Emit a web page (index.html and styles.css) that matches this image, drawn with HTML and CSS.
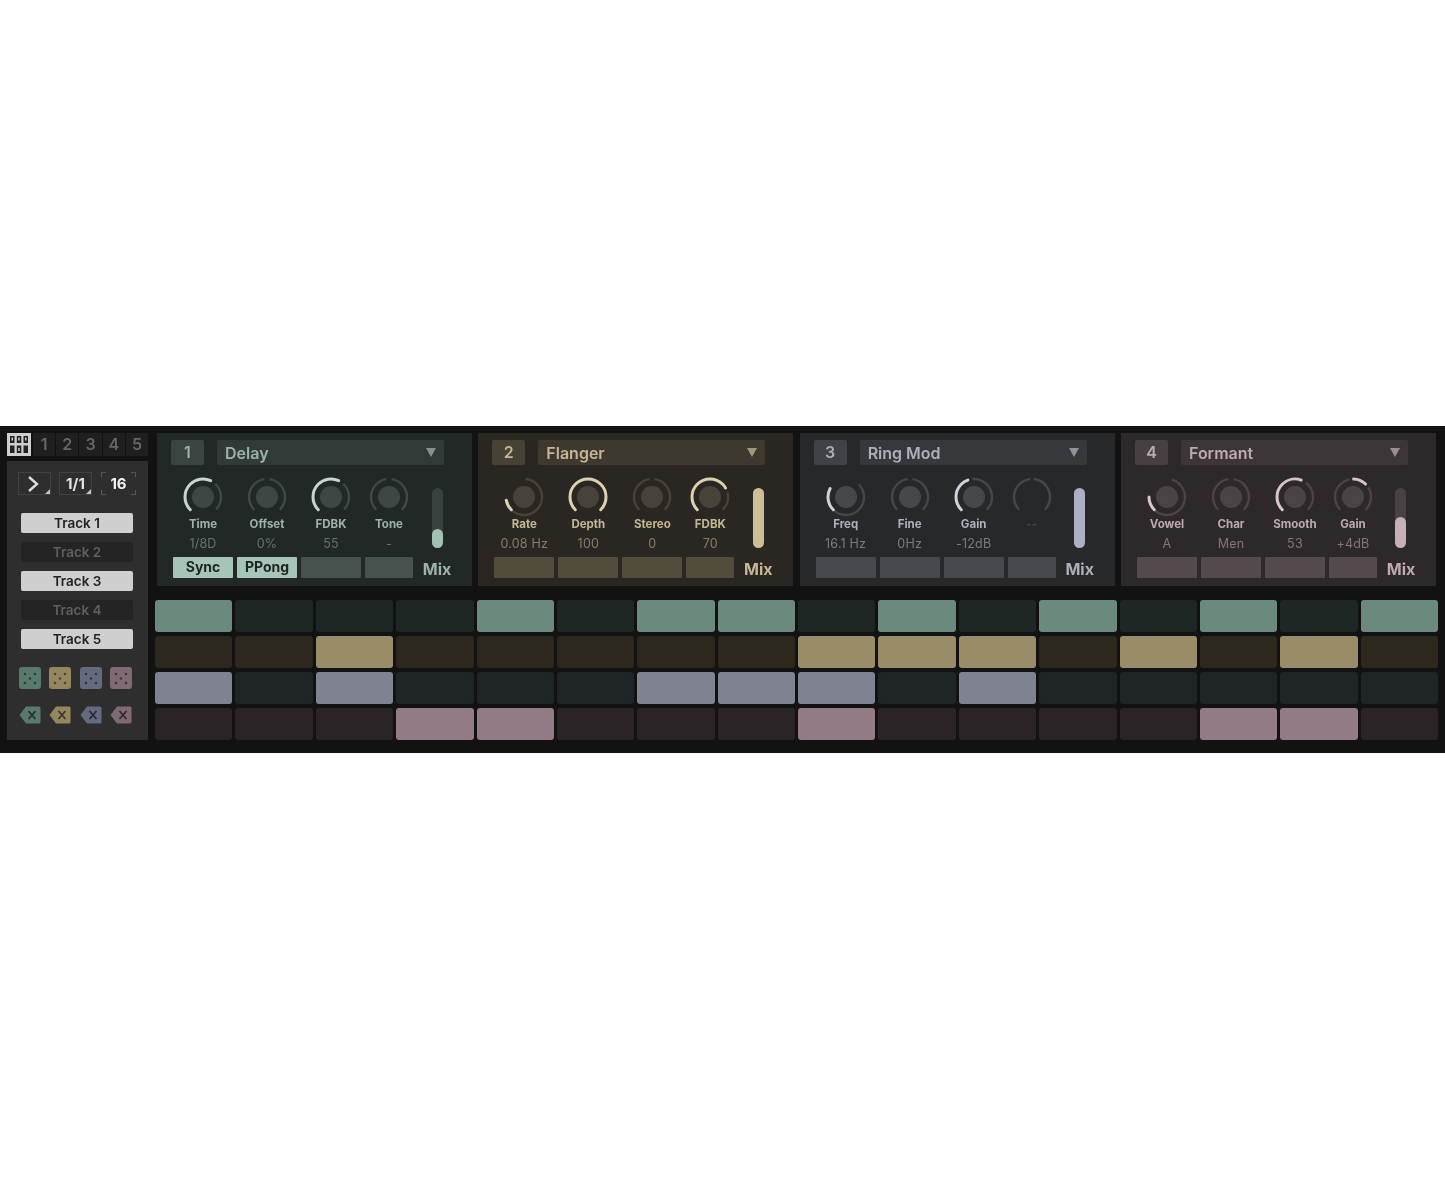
FILE: index.html
```html
<!DOCTYPE html>
<html lang="en">
<head>
<meta charset="utf-8">
<title>FX Sequencer</title>
<link rel="stylesheet" href="styles.css">
</head>
<body>
<div class="band">
  <aside class="side">
    <div class="tabs">
      <div class="tab-icon"><svg width="24" height="23" viewBox="0 0 24 23"><rect width="24" height="23" fill="#cfcfcf"/><g fill="#222"><rect x="3" y="3" width="4.5" height="7"/><rect x="9.8" y="3" width="4.5" height="7"/><rect x="16.5" y="3" width="4.5" height="7"/><rect x="3" y="12.5" width="4.5" height="7.5"/><rect x="9.8" y="12.5" width="4.5" height="7.5"/><rect x="16.5" y="12.5" width="4.5" height="7.5"/></g><g fill="#cfcfcf"><rect x="4.5" y="4.5" width="1.5" height="3"/><rect x="11.2" y="4.5" width="1.5" height="3"/><rect x="18" y="4.5" width="1.5" height="3"/><rect x="11.2" y="15" width="1.5" height="3"/></g></svg></div>
      <div class="tab">1</div><div class="tab">2</div><div class="tab">3</div><div class="tab">4</div><div class="tab">5</div>
    </div>
    <div class="side-body">
      <div class="transport">
        <div class="tbox arrow"><svg width="14" height="18" viewBox="0 0 14 18"><path d="M3 2l8 7-8 7" fill="none" stroke="#dcdcdc" stroke-width="2.4"/></svg></div>
        <div class="tbox rate">1/1</div>
        <div class="steps"><i class="c tl"></i><i class="c tr"></i><i class="c bl"></i><i class="c br"></i>16</div>
      </div>
      <div class="tracks">
        <div class="track on">Track 1</div>
        <div class="track">Track 2</div>
        <div class="track on">Track 3</div>
        <div class="track">Track 4</div>
        <div class="track on">Track 5</div>
      </div>
      <div class="icons dice">
        <svg class="green" width="22" height="22" viewBox="0 0 22 22"><use href="#die"/></svg>
        <svg class="yellow" width="22" height="22" viewBox="0 0 22 22"><use href="#die"/></svg>
        <svg class="blue" width="22" height="22" viewBox="0 0 22 22"><use href="#die"/></svg>
        <svg class="pink" width="22" height="22" viewBox="0 0 22 22"><use href="#die"/></svg>
      </div>
      <div class="icons clears">
        <svg class="green" width="22" height="18" viewBox="0 0 22 18"><use href="#clear"/></svg>
        <svg class="yellow" width="22" height="18" viewBox="0 0 22 18"><use href="#clear"/></svg>
        <svg class="blue" width="22" height="18" viewBox="0 0 22 18"><use href="#clear"/></svg>
        <svg class="pink" width="22" height="18" viewBox="0 0 22 18"><use href="#clear"/></svg>
      </div>
    </div>
  </aside>

  <main class="main">
    <div class="panels">

      <section class="panel p-green">
        <header class="head"><div class="num">1</div><div class="select"><span>Delay</span><b class="tri"></b></div></header>
        <div class="controls">
          <div class="params">
            <div class="param">
              <svg class="knob" viewBox="0 0 40 40"><circle class="face" cx="20" cy="20" r="11"/><circle class="rail" cx="20" cy="20" r="18" pathLength="360" stroke-dasharray="90 360" transform="rotate(-47 20 20)"/><circle class="val" cx="20" cy="20" r="18" pathLength="360" stroke-dasharray="160 360" transform="rotate(135 20 20)"/></svg>
              <div class="label">Time</div><div class="value">1/8D</div>
            </div>
            <div class="param">
              <svg class="knob" viewBox="0 0 40 40"><circle class="face" cx="20" cy="20" r="11"/><circle class="rail" cx="20" cy="20" r="18" pathLength="360" stroke-dasharray="127 360" transform="rotate(135 20 20)"/><circle class="rail" cx="20" cy="20" r="18" pathLength="360" stroke-dasharray="127 360" transform="rotate(-82 20 20)"/></svg>
              <div class="label">Offset</div><div class="value">0%</div>
            </div>
            <div class="param">
              <svg class="knob" viewBox="0 0 40 40"><circle class="face" cx="20" cy="20" r="11"/><circle class="rail" cx="20" cy="20" r="18" pathLength="360" stroke-dasharray="90 360" transform="rotate(-47 20 20)"/><circle class="val" cx="20" cy="20" r="18" pathLength="360" stroke-dasharray="160 360" transform="rotate(135 20 20)"/></svg>
              <div class="label">FDBK</div><div class="value">55</div>
            </div>
            <div class="param">
              <svg class="knob" viewBox="0 0 40 40"><circle class="face" cx="20" cy="20" r="11"/><circle class="rail" cx="20" cy="20" r="18" pathLength="360" stroke-dasharray="127 360" transform="rotate(135 20 20)"/><circle class="rail" cx="20" cy="20" r="18" pathLength="360" stroke-dasharray="127 360" transform="rotate(-82 20 20)"/></svg>
              <div class="label">Tone</div><div class="value">-</div>
            </div>
            <div class="btn on">Sync</div><div class="btn on">PPong</div><div class="btn"></div><div class="btn"></div>
          </div>
          <div class="mix"><div class="slider"><div class="fill" style="height:32%"></div></div><div class="mix-label">Mix</div></div>
        </div>
      </section>

      <section class="panel p-yellow">
        <header class="head"><div class="num">2</div><div class="select"><span>Flanger</span><b class="tri"></b></div></header>
        <div class="controls">
          <div class="params">
            <div class="param">
              <svg class="knob" viewBox="0 0 40 40"><circle class="face" cx="20" cy="20" r="11"/><circle class="rail" cx="20" cy="20" r="18" pathLength="360" stroke-dasharray="220 360" transform="rotate(-85 20 20)"/><circle class="val" cx="20" cy="20" r="18" pathLength="360" stroke-dasharray="35 360" transform="rotate(135 20 20)"/></svg>
              <div class="label">Rate</div><div class="value">0.08 Hz</div>
            </div>
            <div class="param">
              <svg class="knob" viewBox="0 0 40 40"><circle class="face" cx="20" cy="20" r="11"/><circle class="val" cx="20" cy="20" r="18" pathLength="360" stroke-dasharray="270 360" transform="rotate(135 20 20)"/></svg>
              <div class="label">Depth</div><div class="value">100</div>
            </div>
            <div class="param">
              <svg class="knob" viewBox="0 0 40 40"><circle class="face" cx="20" cy="20" r="11"/><circle class="rail" cx="20" cy="20" r="18" pathLength="360" stroke-dasharray="127 360" transform="rotate(135 20 20)"/><circle class="rail" cx="20" cy="20" r="18" pathLength="360" stroke-dasharray="127 360" transform="rotate(-82 20 20)"/></svg>
              <div class="label">Stereo</div><div class="value">0</div>
            </div>
            <div class="param">
              <svg class="knob" viewBox="0 0 40 40"><circle class="face" cx="20" cy="20" r="11"/><circle class="rail" cx="20" cy="20" r="18" pathLength="360" stroke-dasharray="60 360" transform="rotate(-15 20 20)"/><circle class="val" cx="20" cy="20" r="18" pathLength="360" stroke-dasharray="195 360" transform="rotate(135 20 20)"/></svg>
              <div class="label">FDBK</div><div class="value">70</div>
            </div>
            <div class="btn"></div><div class="btn"></div><div class="btn"></div><div class="btn"></div>
          </div>
          <div class="mix"><div class="slider"><div class="fill" style="height:100%"></div></div><div class="mix-label">Mix</div></div>
        </div>
      </section>

      <section class="panel p-blue">
        <header class="head"><div class="num">3</div><div class="select"><span>Ring Mod</span><b class="tri"></b></div></header>
        <div class="controls">
          <div class="params">
            <div class="param">
              <svg class="knob" viewBox="0 0 40 40"><circle class="face" cx="20" cy="20" r="11"/><circle class="rail" cx="20" cy="20" r="18" pathLength="360" stroke-dasharray="180 360" transform="rotate(-45 20 20)"/><circle class="val" cx="20" cy="20" r="18" pathLength="360" stroke-dasharray="73 360" transform="rotate(135 20 20)"/></svg>
              <div class="label">Freq</div><div class="value">16.1 Hz</div>
            </div>
            <div class="param">
              <svg class="knob" viewBox="0 0 40 40"><circle class="face" cx="20" cy="20" r="11"/><circle class="rail" cx="20" cy="20" r="18" pathLength="360" stroke-dasharray="127 360" transform="rotate(135 20 20)"/><circle class="rail" cx="20" cy="20" r="18" pathLength="360" stroke-dasharray="127 360" transform="rotate(-82 20 20)"/></svg>
              <div class="label">Fine</div><div class="value">0Hz</div>
            </div>
            <div class="param">
              <svg class="knob" viewBox="0 0 40 40"><circle class="face" cx="20" cy="20" r="11"/><circle class="rail" cx="20" cy="20" r="18" pathLength="360" stroke-dasharray="140 360" transform="rotate(-95 20 20)"/><circle class="val" cx="20" cy="20" r="18" pathLength="360" stroke-dasharray="115 360" transform="rotate(135 20 20)"/></svg>
              <div class="label">Gain</div><div class="value">-12dB</div>
            </div>
            <div class="param">
              <svg class="knob" viewBox="0 0 40 40"><circle class="rail" cx="20" cy="20" r="18" pathLength="360" stroke-dasharray="130 360" transform="rotate(135 20 20)"/><circle class="rail" cx="20" cy="20" r="18" pathLength="360" stroke-dasharray="130 360" transform="rotate(-85 20 20)"/></svg>
              <div class="label dim">--</div><div class="value"></div>
            </div>
            <div class="btn"></div><div class="btn"></div><div class="btn"></div><div class="btn"></div>
          </div>
          <div class="mix"><div class="slider"><div class="fill" style="height:100%"></div></div><div class="mix-label">Mix</div></div>
        </div>
      </section>

      <section class="panel p-pink">
        <header class="head"><div class="num">4</div><div class="select"><span>Formant</span><b class="tri"></b></div></header>
        <div class="controls">
          <div class="params">
            <div class="param">
              <svg class="knob" viewBox="0 0 40 40"><circle class="face" cx="20" cy="20" r="11"/><circle class="rail" cx="20" cy="20" r="18" pathLength="360" stroke-dasharray="210 360" transform="rotate(-75 20 20)"/><circle class="val" cx="20" cy="20" r="18" pathLength="360" stroke-dasharray="45 360" transform="rotate(135 20 20)"/></svg>
              <div class="label">Vowel</div><div class="value">A</div>
            </div>
            <div class="param">
              <svg class="knob" viewBox="0 0 40 40"><circle class="face" cx="20" cy="20" r="11"/><circle class="rail" cx="20" cy="20" r="18" pathLength="360" stroke-dasharray="127 360" transform="rotate(135 20 20)"/><circle class="rail" cx="20" cy="20" r="18" pathLength="360" stroke-dasharray="127 360" transform="rotate(-82 20 20)"/></svg>
              <div class="label">Char</div><div class="value">Men</div>
            </div>
            <div class="param">
              <svg class="knob" viewBox="0 0 40 40"><circle class="face" cx="20" cy="20" r="11"/><circle class="rail" cx="20" cy="20" r="18" pathLength="360" stroke-dasharray="97 360" transform="rotate(-52 20 20)"/><circle class="val" cx="20" cy="20" r="18" pathLength="360" stroke-dasharray="155 360" transform="rotate(135 20 20)"/></svg>
              <div class="label">Smooth</div><div class="value">53</div>
            </div>
            <div class="param">
              <svg class="knob" viewBox="0 0 40 40"><circle class="face" cx="20" cy="20" r="11"/><circle class="rail" cx="20" cy="20" r="18" pathLength="360" stroke-dasharray="123 360" transform="rotate(135 20 20)"/><circle class="rail" cx="20" cy="20" r="18" pathLength="360" stroke-dasharray="78 360" transform="rotate(-33 20 20)"/><circle class="val" cx="20" cy="20" r="18" pathLength="360" stroke-dasharray="42 360" transform="rotate(-88 20 20)"/></svg>
              <div class="label">Gain</div><div class="value">+4dB</div>
            </div>
            <div class="btn"></div><div class="btn"></div><div class="btn"></div><div class="btn"></div>
          </div>
          <div class="mix"><div class="slider"><div class="fill" style="height:52%"></div></div><div class="mix-label">Mix</div></div>
        </div>
      </section>

    </div>

    <div class="grid">
      <i class="cell g on"></i><i class="cell g"></i><i class="cell g"></i><i class="cell g"></i><i class="cell g on"></i><i class="cell g"></i><i class="cell g on"></i><i class="cell g on"></i><i class="cell g"></i><i class="cell g on"></i><i class="cell g"></i><i class="cell g on"></i><i class="cell g"></i><i class="cell g on"></i><i class="cell g"></i><i class="cell g on"></i>
      <i class="cell y"></i><i class="cell y"></i><i class="cell y on"></i><i class="cell y"></i><i class="cell y"></i><i class="cell y"></i><i class="cell y"></i><i class="cell y"></i><i class="cell y on"></i><i class="cell y on"></i><i class="cell y on"></i><i class="cell y"></i><i class="cell y on"></i><i class="cell y"></i><i class="cell y on"></i><i class="cell y"></i>
      <i class="cell b on"></i><i class="cell b"></i><i class="cell b on"></i><i class="cell b"></i><i class="cell b"></i><i class="cell b"></i><i class="cell b on"></i><i class="cell b on"></i><i class="cell b on"></i><i class="cell b"></i><i class="cell b on"></i><i class="cell b"></i><i class="cell b"></i><i class="cell b"></i><i class="cell b"></i><i class="cell b"></i>
      <i class="cell p"></i><i class="cell p"></i><i class="cell p"></i><i class="cell p on"></i><i class="cell p on"></i><i class="cell p"></i><i class="cell p"></i><i class="cell p"></i><i class="cell p on"></i><i class="cell p"></i><i class="cell p"></i><i class="cell p"></i><i class="cell p"></i><i class="cell p on"></i><i class="cell p on"></i><i class="cell p"></i>
    </div>
  </main>
</div>

<svg class="defs" width="0" height="0" aria-hidden="true">
  <symbol id="die" viewBox="0 0 22 22">
    <rect width="22" height="22" rx="3" fill="currentColor"/>
    <g fill="#000" fill-opacity=".5"><circle cx="6" cy="7" r="1.3"/><circle cx="16" cy="7" r="1.3"/><circle cx="11" cy="11.5" r="1.3"/><circle cx="6" cy="16" r="1.3"/><circle cx="16" cy="16" r="1.3"/></g>
  </symbol>
  <symbol id="clear" viewBox="0 0 22 18">
    <path d="M7 0.5H20a1.5 1.5 0 0 1 1.5 1.5V16a1.5 1.5 0 0 1-1.5 1.5H7L0.5 9z" fill="currentColor"/>
    <path d="M9.5 5l7 8M16.5 5l-7 8" stroke="#000" stroke-opacity=".6" stroke-width="1.8" fill="none"/>
  </symbol>
</svg>
</body>
</html>
```
FILE: styles.css
```css
* { box-sizing: border-box; }
html, body { margin: 0; background: #fefefe; }
body { padding-top: 426px; height: 1179px; overflow: hidden; font-family: Inter, "Liberation Sans", sans-serif; }
.defs { position: absolute; }

.band { display: flex; gap: 7px; height: 327px; padding: 7px 7px 0; background: #111211; filter: blur(0.6px); }

/* sidebar */
.side { width: 141px; flex: none; display: flex; flex-direction: column; gap: 5px; height: 307px; }
.tabs { display: flex; height: 23px; gap: 1px; }
.tab-icon { width: 24px; flex: none; margin-right: 1px; line-height: 0; }
.tab { flex: 1; background: #1f1f1f; color: #666; font-size: 16px; font-weight: 600; text-align: center; line-height: 23px; }
.side-body { flex: 1; background: #2e2e2e; padding: 11px 0 0 11px; }
.transport { display: flex; gap: 8px; height: 23px; }
.tbox { position: relative; border: 1px solid #414141; width: 33px; color: #e2e2e2; display: flex; align-items: center; justify-content: center; font-size: 15px; font-weight: 700; }
.tbox::after { content: ""; position: absolute; right: 0; bottom: 0; border-left: 5px solid transparent; border-bottom: 5px solid #c4c4c4; }
.arrow { justify-content: flex-start; padding-left: 7px; }
.steps { position: relative; width: 35px; margin-left: 1px; color: #f0f0f0; font-size: 15px; font-weight: 700; text-align: center; line-height: 23px; }
.c { position: absolute; width: 5px; height: 5px; border: 0 solid #555; }
.c.tl { left: 0; top: 0; border-width: 1px 0 0 1px; }
.c.tr { right: 0; top: 0; border-width: 1px 1px 0 0; }
.c.bl { left: 0; bottom: 0; border-width: 0 0 1px 1px; }
.c.br { right: 0; bottom: 0; border-width: 0 1px 1px 0; }

.tracks { display: flex; flex-direction: column; gap: 9px; margin: 18px 0 0 3px; width: 112px; }
.track { height: 20px; background: #242424; color: #5f5f5f; font-size: 13.5px; font-weight: 600; line-height: 21px; text-align: center; border-radius: 2px; }
.track.on { background: #cfcfcf; color: #222; }

.icons { display: flex; gap: 8.3px; margin-left: 1px; }
.dice { margin-top: 18px; }
.clears { margin-top: 17px; }
.icons svg { flex: none; }
.green { color: #587a6c; }
.yellow { color: #94875f; }
.blue { color: #646a80; }
.pink { color: #7e6974; }

/* panels */
.main { flex: 1; min-width: 0; display: flex; flex-direction: column; gap: 14px; }
.panels { display: flex; gap: 6.33px; padding: 0 2px; }
.panel { flex: 1 1 0; min-width: 0; height: 153px; padding: 7px 0 0 14px; background: var(--bg); color: var(--text); }
.p-green { --bg: #222826; --box: #3a4441; --sel: #323a37; --text: #9db3a9; --accent: #a3c0b3; --arc: #c4d6cd; --btn: #47514d; --rail: #414946; --face: #3e4744; --dim: #66736d; --track: #39423f; }
.p-yellow { --bg: #2a2722; --box: #474236; --sel: #3d392f; --text: #c4b792; --accent: #cdbf95; --arc: #ddd2b0; --btn: #524c3d; --rail: #47433a; --face: #47433a; --dim: #857e67; --track: #4a4638; }
.p-blue { --bg: #27282a; --box: #404245; --sel: #36383b; --text: #adb0ba; --accent: #abb0c4; --arc: #cfd2da; --btn: #46494e; --rail: #45474a; --face: #46484c; --dim: #7a7c83; --track: #43464b; }
.p-pink { --bg: #2d2829; --box: #464042; --sel: #3c3638; --text: #bfaab2; --accent: #c8aeb9; --arc: #d8c4cc; --btn: #544a4e; --rail: #4a4447; --face: #4a4447; --dim: #85767c; --track: #494245; }

.head { display: flex; gap: 13px; height: 25px; width: 273px; }
.num { width: 33px; background: var(--box); border-radius: 2px; text-align: center; font-size: 16px; font-weight: 600; line-height: 25px; }
.select { flex: 1; background: var(--sel); border-radius: 2px; padding: 0 8px; display: flex; align-items: center; justify-content: space-between; font-size: 16px; font-weight: 600; }
.tri { border-left: 5.5px solid transparent; border-right: 5.5px solid transparent; border-top: 9px solid var(--text); opacity: .75; margin-right: 0; }

.controls { display: flex; margin-top: 12px; padding-left: 2px; }
.params { display: grid; grid-template-columns: 60px 60px 60px 48px; column-gap: 4px; width: 240px; flex: none; }
.param { display: flex; flex-direction: column; align-items: center; }
.knob { width: 40px; height: 40px; flex: none; }
.knob circle { fill: none; stroke-width: 2.4; }
.knob .face { fill: var(--face); stroke: none; }
.knob .rail { stroke: var(--rail); }
.knob .val { stroke: var(--arc); stroke-width: 3; stroke-linecap: round; }
.label { height: 14px; line-height: 14px; font-size: 11.5px; font-weight: 700; color: var(--text); white-space: nowrap; }
.label.dim { color: var(--rail); }
.value { height: 17px; line-height: 17px; margin-top: 4px; font-size: 12.5px; color: var(--dim); white-space: nowrap; letter-spacing: .2px; }
.btn { grid-row: 2; height: 21px; margin-top: 4px; background: var(--btn); border-radius: 1px; color: #1e2422; font-size: 14px; font-weight: 700; text-align: center; line-height: 19px; }
.btn.on { background: #a6c5b8; }

.mix { width: 48px; flex: none; display: flex; flex-direction: column; align-items: center; }
.slider { width: 11px; height: 60px; margin-top: 11px; background: var(--track); border-radius: 5.5px; display: flex; align-items: flex-end; }
.fill { width: 100%; background: var(--accent); border-radius: 5.5px; }
.mix-label { margin-top: 11px; font-size: 16px; font-weight: 700; line-height: 20px; color: var(--text); }

/* step grid */
.grid { display: grid; grid-template-columns: repeat(16, 1fr); grid-auto-rows: 32px; gap: 4px 3px; }
.cell { display: block; border-radius: 3px; }
.cell.g { background: #1f2725; }
.cell.g.on { background: #6b897c; }
.cell.y { background: #2c281d; }
.cell.y.on { background: #998d69; }
.cell.b { background: #1f2427; }
.cell.b.on { background: #7f8291; }
.cell.p { background: #2a2426; }
.cell.p.on { background: #927b87; }
```
